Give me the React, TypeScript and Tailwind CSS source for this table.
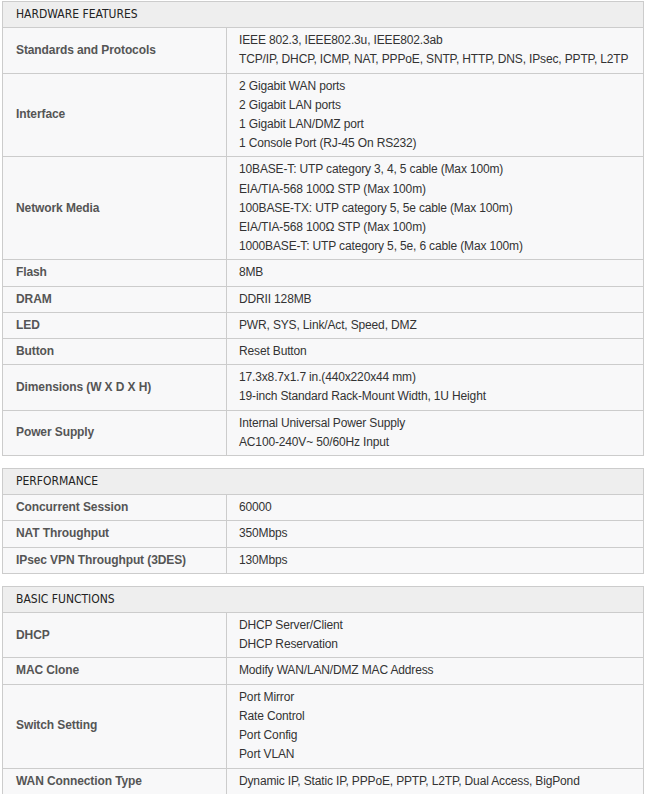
const sections = [
  {
    title: "HARDWARE FEATURES",
    rows: [
      {
        label: "Standards and Protocols",
        values: [
          "IEEE 802.3, IEEE802.3u, IEEE802.3ab",
          "TCP/IP, DHCP, ICMP, NAT, PPPoE, SNTP, HTTP, DNS, IPsec, PPTP, L2TP"
        ]
      },
      {
        label: "Interface",
        values: ["2 Gigabit WAN ports", "2 Gigabit LAN ports", "1 Gigabit LAN/DMZ port", "1 Console Port (RJ-45 On RS232)"]
      },
      {
        label: "Network Media",
        values: [
          "10BASE-T: UTP category 3, 4, 5 cable (Max 100m)",
          "EIA/TIA-568 100Ω STP (Max 100m)",
          "100BASE-TX: UTP category 5, 5e cable (Max 100m)",
          "EIA/TIA-568 100Ω STP (Max 100m)",
          "1000BASE-T: UTP category 5, 5e, 6 cable (Max 100m)"
        ]
      },
      { label: "Flash", values: ["8MB"] },
      { label: "DRAM", values: ["DDRII 128MB"] },
      { label: "LED", values: ["PWR, SYS, Link/Act, Speed, DMZ"] },
      { label: "Button", values: ["Reset Button"] },
      {
        label: "Dimensions (W X D X H)",
        values: ["17.3x8.7x1.7 in.(440x220x44 mm)", "19-inch Standard Rack-Mount Width, 1U Height"]
      },
      {
        label: "Power Supply",
        values: ["Internal Universal Power Supply", "AC100-240V~ 50/60Hz Input"]
      }
    ]
  },
  {
    title: "PERFORMANCE",
    rows: [
      { label: "Concurrent Session", values: ["60000"] },
      { label: "NAT Throughput", values: ["350Mbps"] },
      { label: "IPsec VPN Throughput (3DES)", values: ["130Mbps"] }
    ]
  },
  {
    title: "BASIC FUNCTIONS",
    rows: [
      { label: "DHCP", values: ["DHCP Server/Client", "DHCP Reservation"] },
      { label: "MAC Clone", values: ["Modify WAN/LAN/DMZ MAC Address"] },
      { label: "Switch Setting", values: ["Port Mirror", "Rate Control", "Port Config", "Port VLAN"] },
      { label: "WAN Connection Type", values: ["Dynamic IP, Static IP, PPPoE, PPTP, L2TP, Dual Access, BigPond"] }
    ]
  }
];

export default function App() {
  return (
    <div className="min-h-[794px] bg-white pl-[2px] pt-px font-['Liberation_Sans',Arial,sans-serif] text-[12px] leading-[19.2px]">
      <div className="flex flex-col gap-3">
        {sections.map((section) => (
          <table key={section.title} className="w-[642px] table-fixed border-collapse">
            <colgroup>
              <col className="w-[224px]" />
              <col />
            </colgroup>
            <thead>
              <tr>
                <th
                  colSpan={2}
                  className="border border-[#cccccc] bg-[#eeeeee] py-[3px] pl-[13px] text-left font-['DejaVu_Sans_Condensed','DejaVu_Sans',Tahoma,sans-serif] text-[12px] font-normal text-[#222222]"
                >
                  {section.title}
                </th>
              </tr>
            </thead>
            <tbody>
              {section.rows.map((row) => (
                <tr key={row.label}>
                  <td className="border border-[#cccccc] bg-[#f8f8f9] py-[3px] pl-[13px] align-middle font-bold tracking-[-0.1px] text-[#555555]">
                    {row.label}
                  </td>
                  <td className="border border-[#cccccc] bg-[#f8f8f9] py-[3px] pl-3 align-middle tracking-[-0.15px] text-[#333333]">
                    {row.values.map((v) => (
                      <div key={v}>{v}</div>
                    ))}
                  </td>
                </tr>
              ))}
            </tbody>
          </table>
        ))}
      </div>
    </div>
  );
}
